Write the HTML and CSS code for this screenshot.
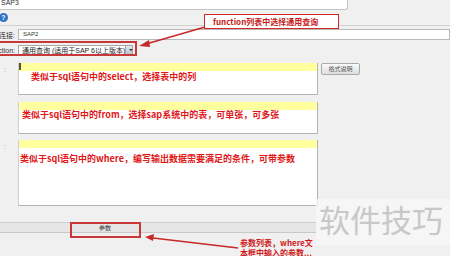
FILE: index.html
```html
<!DOCTYPE html>
<html lang="zh-CN">
	<head>
		<meta charset="utf-8">
		<title>SAP 查询</title>
		<link rel="stylesheet" href="styles.css">
	</head>
	<body>
		<div id="page">
			<div id="top-input">SAP3</div>
			<div id="help-row"><span class="help-icon">?</span></div>
			<div class="separator"></div>
			<div class="form-row" id="conn-row">
				<span class="form-label"><span>连接:</span></span>
				<div class="text-field">SAP2</div>
			</div>
			<div class="form-row" id="func-row">
				<span class="form-label"><span>function:</span></span>
				<div class="select-field">
					<span class="select-text">通用查询 (适用于SAP 6以上版本)</span>
					<span class="select-arrow"></span>
				</div>
			</div>
			<div class="editor-row" id="select-row">
				<span class="gutter-mark">:</span>
				<div class="editor editor-small">
					<div class="line-highlight"><span class="caret"></span></div>
					<p class="editor-text indent">类似于sql语句中的select，选择表中的列</p>
				</div>
				<button class="format-button" type="button">格式说明</button>
			</div>
			<div class="editor-row" id="from-row">
				<span class="gutter-mark"></span>
				<div class="editor editor-small">
					<div class="line-highlight"></div>
					<p class="editor-text">类似于sql语句中的from，选择sap系统中的表，可单张，可多张</p>
				</div>
			</div>
			<div class="editor-row" id="where-row">
				<span class="gutter-mark">:</span>
				<div class="editor editor-large">
					<div class="line-highlight"></div>
					<p class="editor-text spaced">类似于sql语句中的where，编写输出数据需要满足的条件，可带参数</p>
				</div>
			</div>
			<div id="tab-bar">
				<span class="tab">参数</span>
			</div>
		</div>
		<div class="note-box" id="note-function">function列表中选择通用查询</div>
		<div class="mark-box" id="mark-select"></div>
		<div class="mark-box" id="mark-tab"></div>
		<div class="note-text" id="note-params">参数列表，where文<br>本框中输入的参数...</div>
		<div id="watermark">软件技巧</div>
		<svg id="arrows" width="450" height="256" viewBox="0 0 450 256">
			<line x1="205" y1="27" x2="146" y2="44" stroke="#c82828" stroke-width="1.5"/>
			<polygon points="139,46 149,40 150,47" fill="#c82828"/>
			<line x1="238" y1="248" x2="153" y2="238" stroke="#c82828" stroke-width="1.5"/>
			<polygon points="145,237 154,234 153,241" fill="#c82828"/>
		</svg>
	</body>
</html>
```

FILE: styles.css
```css
			* {
				box-sizing:border-box}
			body {
				background-color:#f0f0f0;
				font-family:"Liberation Sans","Noto Sans CJK SC",sans-serif;
				height:256px;
				margin:0;
				overflow:hidden;
				position:relative;
				width:450px}
			#page {
				display:flex;
				flex-direction:column}
			#top-input {
				background-color:#ffffff;
				border-bottom:1px solid #c4c4c4;
				border-bottom-right-radius:3px;
				border-right:1px solid #c4c4c4;
				color:#333333;
				font-size:7px;
				height:10px;
				line-height:5px;
				padding-left:1px;
				width:348px}
			#help-row {
				height:10px;
				margin-top:3px}
			.help-icon {
				background-color:#2f6fc4;
				border-radius:50%;
				color:#ffffff;
				display:block;
				font-size:7px;
				font-weight:bold;
				height:9px;
				line-height:9px;
				margin-left:-1px;
				text-align:center;
				width:9px}
			.separator {
				border-top:1px solid #d2d2d2;
				margin-top:2px}
			.form-row {
				align-items:center;
				display:flex}
			#conn-row {
				height:11px;
				margin-top:3px}
			#func-row {
				height:10px;
				margin-top:5px}
			.form-label {
				color:#333333;
				display:flex;
				flex-shrink:0;
				font-size:7px;
				justify-content:flex-end;
				overflow:hidden;
				padding-right:3px;
				white-space:nowrap;
				width:18px}
			.form-label span {
				flex-shrink:0}
			.text-field {
				background-color:#ffffff;
				border:1px solid #b8b8b8;
				color:#333333;
				flex:1;
				font-size:6px;
				height:11px;
				line-height:9px;
				padding-left:4px}
			.select-field {
				align-items:center;
				background-color:#ffffff;
				border:1px solid #a8a8a8;
				display:flex;
				height:10px;
				justify-content:space-between;
				padding-left:3px;
				width:115px}
			.select-text {
				color:#222222;
				font-size:7px;
				white-space:nowrap}
			.select-arrow {
				background:linear-gradient(#e4e8ef,#b9c2d0);
				border-left:1px solid #9aa5b5;
				height:8px;
				position:relative;
				width:10px}
			.select-arrow:after {
				border-left:2px solid transparent;
				border-right:2px solid transparent;
				border-top:2px solid #333333;
				content:"";
				left:3px;
				position:absolute;
				top:3px}
			.editor-row {
				display:flex}
			#select-row {
				margin-top:8px}
			#from-row {
				margin-top:7px}
			#where-row {
				margin-top:6px}
			.gutter-mark {
				color:#999999;
				font-size:7px;
				line-height:8px;
				padding-left:4px;
				padding-top:3px;
				width:18px}
			.editor {
				background-color:#ffffff;
				border:1px solid #b4b4b4;
				border-left-color:#cfcfcf;
				border-top:none;
				width:300px}
			.editor-small {
				height:32px}
			.editor-large {
				height:66px}
			.line-highlight {
				background-color:#ffff9e;
				height:8px}
			.caret {
				background-color:#555533;
				display:block;
				height:7px;
				width:2px}
			.editor-text {
				color:#e01818;
				font-family:"Noto Sans CJK SC",sans-serif;
				font-size:9px;
				font-weight:bold;
				line-height:9px;
				margin:0;
				padding-left:3px;
				white-space:nowrap}
			.indent {
				padding-left:12px;
				padding-top:1px}
			.spaced {
				padding-left:1px;
				padding-top:6px}
			.format-button {
				background:linear-gradient(#fafafa,#dedede);
				border:1px solid #a9a9a9;
				border-radius:2px;
				color:#555555;
				font-family:"Noto Sans CJK SC",sans-serif;
				font-size:6px;
				height:12px;
				line-height:8px;
				margin-left:3px;
				padding:0;
				width:39px}
			#tab-bar {
				background-color:#e6e6e6;
				border-bottom:1px solid #c8c8c8;
				border-top:1px solid #d0d0d0;
				height:11px;
				margin-top:16px;
				padding-left:72px;
				width:316px}
			.tab {
				color:#333333;
				display:block;
				font-family:"Noto Sans CJK SC",sans-serif;
				font-size:6px;
				line-height:9px;
				text-align:center;
				width:66px}
			.note-box {
				background-color:#ffffff;
				border:1px solid #d02828;
				color:#c81818;
				font-family:"Noto Sans CJK SC",sans-serif;
				font-size:8px;
				font-weight:bold;
				height:15px;
				left:204px;
				line-height:13px;
				padding-left:8px;
				position:absolute;
				top:14px;
				white-space:nowrap;
				width:135px}
			.mark-box {
				border:2px solid #c83838;
				position:absolute}
			#mark-select {
				height:15px;
				left:-2px;
				top:41px;
				width:139px}
			#mark-tab {
				height:16px;
				left:70px;
				top:222px;
				width:71px}
			.note-text {
				color:#d01818;
				font-family:"Noto Sans CJK SC",sans-serif;
				font-size:8px;
				font-weight:bold;
				left:240px;
				line-height:10px;
				overflow:hidden;
				position:absolute;
				top:238px;
				white-space:nowrap;
				width:78px}
			#watermark {
				background-color:rgba(248,248,248,0.8);
				color:#c8c8c8;
				font-family:"Noto Sans CJK SC",sans-serif;
				font-size:31px;
				height:46px;
				left:316px;
				line-height:40px;
				padding-left:3px;
				position:absolute;
				top:199px;
				width:134px}
			#arrows {
				left:0;
				pointer-events:none;
				position:absolute;
				top:0}
```
